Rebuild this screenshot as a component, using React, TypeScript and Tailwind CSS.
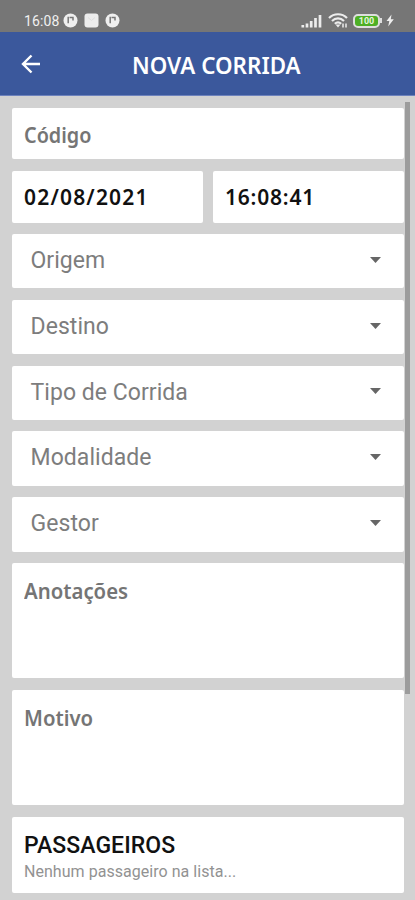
const selects = ["Origem", "Destino", "Tipo de Corrida", "Modalidade", "Gestor"];

function BadgeIcon() {
  return (
    <svg className="size-[15px] shrink-0" viewBox="0 0 15 15">
      <circle cx="7.5" cy="7.5" r="7" fill="#efefef" />
      <path d="M5.2 3.8v6.5M6.500 4.500h4.200M10 4.500v3" fill="none" stroke="#777" strokeWidth="1.5" />
    </svg>
  );
}

function StatusBar() {
  return (
    <div className="flex h-8 items-center bg-[#767676] pt-[9px] pl-6 text-[#f0f0f0]">
      <span className="w-[39px] text-[14px] leading-4 tracking-[0.1px]">16:08</span>
      <BadgeIcon />
      <svg className="ml-[6px] size-[15px]" viewBox="0 0 15 15">
        <rect x="0.5" y="0.5" width="14" height="14" rx="3" fill="#ececec" />
        <path d="M4 4.5l3.5 3 3.5-3" fill="none" stroke="#dedede" />
      </svg>
      <div className="ml-[6px]">
        <BadgeIcon />
      </div>

      {/* Signal */}
      <svg className="ml-[181px] h-[14px] w-[22px] shrink-0" viewBox="0 0 22 14">
        <path
          d="M1.8 11v2.5M6 9.5v4M10.2 7v6.5M14.5 4v9.5M19 1v12.5"
          stroke="#ececec"
          strokeWidth="2.7"
        />
      </svg>

      {/* Wifi */}
      <svg className="ml-[5px] h-[15px] w-[20px] shrink-0" viewBox="0 0 20 15" fill="none">
        <path
          d="M1 5C6 0 14 0 19 5M4 8c3.500-3.500 8.500-3.500 12 0M6.800 10.800c2-1.800 4.400-1.800 6.400 0"
          stroke="#ececec"
          strokeWidth="2.2"
        />
        <path d="M7.500 11.500h5L10 14.500z" fill="#ececec" />
        <path d="M15 10.500v4M18 10.500v4" stroke="#ececec" strokeWidth="1.500" />
      </svg>

      {/* Battery */}
      <div className="ml-[5px] flex h-[14px] w-[27px] shrink-0 items-center justify-center rounded-[5px] border-2 border-[#dedede] bg-[#4daf25] pt-px text-[9px] leading-none font-bold text-[#e5f5df]">
        100
      </div>
      <div className="h-[5px] w-[2px] bg-[#dedede]" />
      <svg className="ml-[4px] h-[13px] w-[8px] shrink-0" viewBox="0 0 8 13">
        <path d="M5.500 0.500L0.500 7h2.800L2.200 12.500 7.800 5.300H4.800z" fill="#eee" />
      </svg>
    </div>
  );
}

export default function App() {
  return (
    <div className="relative h-[900px] w-[415px] overflow-hidden bg-[#d2d2d2] font-['Roboto',sans-serif]">
      <StatusBar />

      <header className="flex h-16 items-center border-b border-[#6d82bd] bg-[#3b589c] pl-[21px] text-white">
        <svg className="h-[20px] w-[20px]" viewBox="0 0 20 20" fill="none" stroke="currentColor" strokeWidth="2.4">
          <path d="M10.500 1.500L2 10l8.500 8.500M2 10h17" />
        </svg>
        <h1 className="ml-[91px] pt-[3px] font-['Noto_Sans',sans-serif] text-[24px] leading-8 font-semibold whitespace-nowrap">
          <span className="inline-block origin-left scale-x-[0.932]">NOVA CORRIDA</span>
        </h1>
      </header>

      <main className="flex flex-col gap-[11.300px] pt-[11.700px] pr-[11px] pl-3 font-['Noto_Sans',sans-serif]">
        <div className="flex h-[51.700px] items-center rounded-[2px] bg-white px-3 pt-[2px] text-[22px] font-semibold text-[#757575]">
          <span className="inline-block origin-left scale-x-[0.9]">Código</span>
        </div>

        <div className="flex gap-[10.500px] text-[21px] font-semibold text-[#111]">
          <div className="flex h-[52px] w-[190.500px] items-center rounded-[2px] bg-white px-3 pt-[2px]">
            <span className="tracking-[1.180px]">02/08/2021</span>
          </div>
          <div className="flex h-[52px] flex-1 items-center rounded-[2px] bg-white px-3 pt-[2px]">
            <span className="tracking-[0.800px]">16:08:41</span>
          </div>
        </div>

        {selects.map((label) => (
          <div
            key={label}
            className="flex h-[54.500px] shrink-0 items-center justify-between rounded-[2px] bg-white pr-[23px] pl-[18.500px] font-['Roboto',sans-serif] text-[23px] text-[#7d7d7d]"
          >
            <span className="tracking-[0.050px]">{label}</span>
            <svg className="mb-[3px] h-[6px] w-[11px]" viewBox="0 0 11 6">
              <path d="M0 0h11L5.500 6z" fill="#666" />
            </svg>
          </div>
        ))}

        <div className="h-[115.500px] rounded-[2px] bg-white px-3 pt-[11px] text-[22px] leading-8 font-semibold text-[#757575]">
          <span className="inline-block origin-left scale-x-[0.925]">Anotações</span>
        </div>
        <div className="h-[115.500px] rounded-[2px] bg-white px-3 pt-[11px] text-[22px] leading-8 font-semibold text-[#757575]">
          <span className="inline-block origin-left scale-x-[0.925]">Motivo</span>
        </div>

        <div className="h-[76.800px] rounded-[2px] bg-white px-3 pt-[15px] font-['Roboto',sans-serif]">
          <h2 className="text-[23px] leading-7 font-medium tracking-[0.050px] text-[#111]">PASSAGEIROS</h2>
          <p className="mt-[2px] text-[16px] leading-5 tracking-[0.040px] text-[#929292]">
            Nenhum passageiro na lista...
          </p>
        </div>
      </main>

      {/* Scrollbar thumb */}
      <div className="absolute top-[102px] right-[5px] h-[592px] w-[5px] bg-[#9c9c9c]" />
    </div>
  );
}
